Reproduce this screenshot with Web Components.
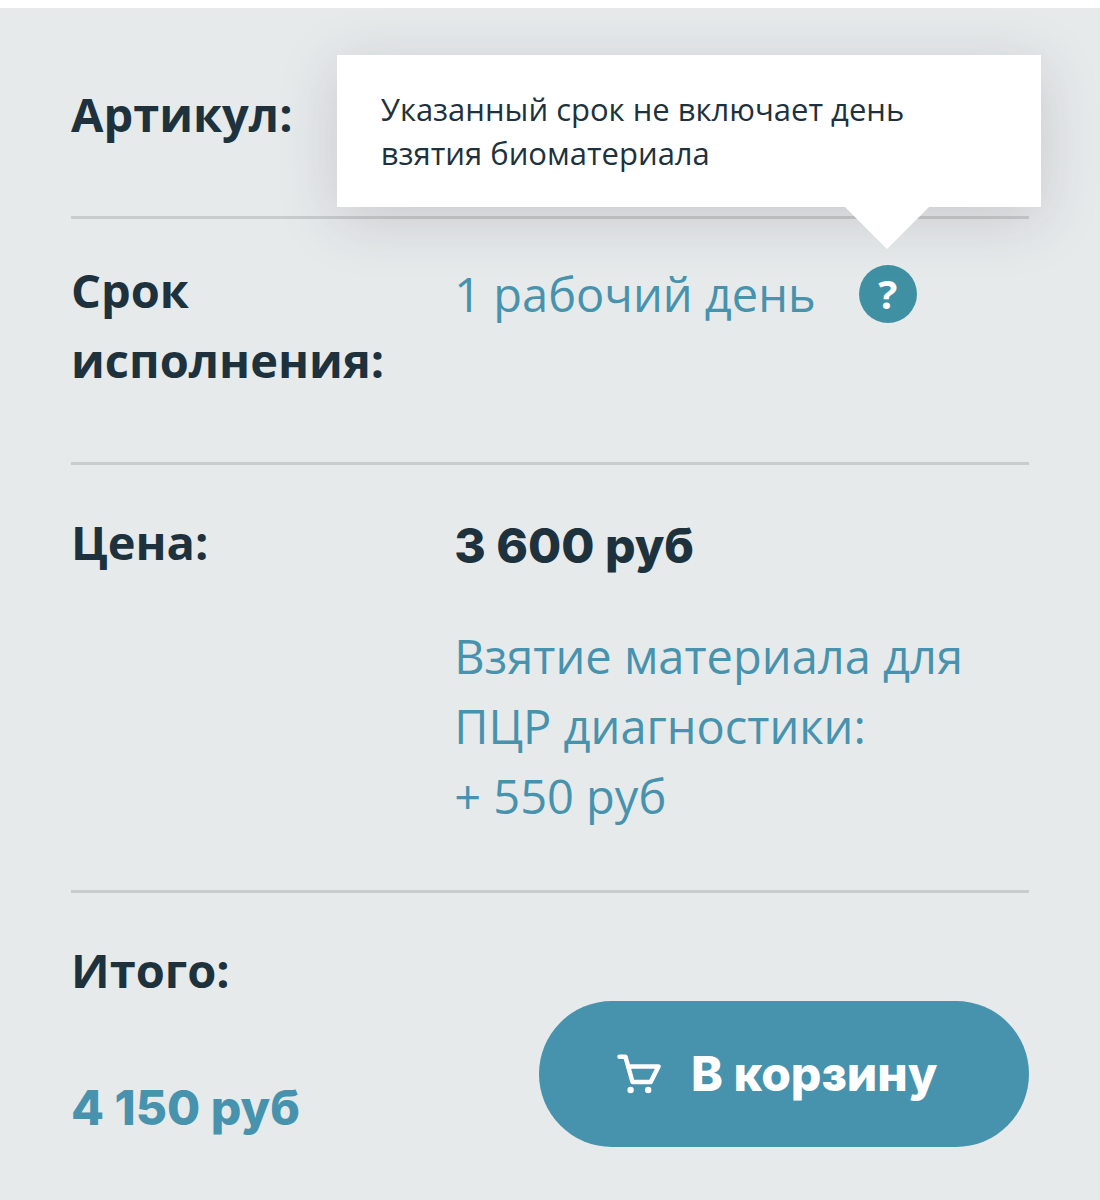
<!DOCTYPE html>
<html lang="ru">
<head>
<meta charset="utf-8">
<meta name="viewport" content="width=device-width, initial-scale=1">
<title>В корзину</title>
<style>
    body {
        margin: 0;
        padding-top: 8px;
        background-color: #FFF;
        font-family: "Open Sans", "Noto Sans", sans-serif;
        font-size: 47px;
        line-height: 70px;
        color: #1D323C;
        --accent: #4793AE;
        --line: #C8CCCD;
        --display: Inter, "Noto Sans", sans-serif;
    }
</style>
</head>
<body>
    <order-card>
        <order-row name="Артикул:"></order-row>
        <order-row name="Срок исполнения:">
            <order-term>1 рабочий день
                <help-tip slot="help">Указанный срок не включает день взятия биоматериала</help-tip>
            </order-term>
        </order-row>
        <order-row name="Цена:" price>
            <order-price>3 600 руб
                <span slot="extra">Взятие материала для ПЦР диагностики:<br>+ 550 руб</span>
            </order-price>
        </order-row>
        <order-total slot="total" name="Итого:" sum="4 150 руб">
            <cart-button>В корзину</cart-button>
        </order-total>
    </order-card>

<script>
    class OrderCard extends HTMLElement {
        constructor() {
            super();
            this.attachShadow({ mode: 'open' });
            this.shadowRoot.innerHTML = `
            <style>
                :host{
                    display: block;
                    box-sizing: border-box;
                    min-height: calc(100vh - 8px);
                    padding: 35px 71px 52px;
                    background-color: #E6EAEB;
                }
            </style>
            <slot></slot>
            <slot name="total"></slot>`;
        }
    }

    class OrderRow extends HTMLElement {
        constructor() {
            super();
            this.attachShadow({ mode: 'open' });
        }

        connectedCallback() {
            this.shadowRoot.innerHTML = `
            <style>
                :host{
                    display: grid;
                    grid-template-columns: 2fr 3fr;
                    padding: 36px 0 67px;
                    border-bottom: 3px solid var(--line);
                }

                :host([price]){
                    padding: 42px 0 59px;
                }

                .name{
                    font-weight: 700;
                }
            </style>
            <div class="name">${this.getAttribute('name')}</div>
            <div class="value"><slot></slot></div>`;
        }
    }

    class OrderTerm extends HTMLElement {
        constructor() {
            super();
            this.attachShadow({ mode: 'open' });
            this.shadowRoot.innerHTML = `
            <style>
                :host{
                    display: flex;
                    align-items: center;
                    gap: 43px;
                    padding-top: 4px;
                    color: var(--accent);
                }
            </style>
            <span><slot></slot></span>
            <slot name="help"></slot>`;
        }
    }

    class HelpTip extends HTMLElement {
        constructor() {
            super();
            this.attachShadow({ mode: 'open' });
            this.shadowRoot.innerHTML = `
            <style>
                :host{
                    display: block;
                    position: relative;
                    width: 58px;
                    height: 58px;
                }

                button{
                    display: block;
                    width: 100%;
                    height: 100%;
                    padding: 0;
                    border: none;
                    border-radius: 50%;
                    background-color: #3F90A3;
                    color: #FFF;
                    font-family: inherit;
                    font-size: 40px;
                    font-weight: 700;
                    line-height: 58px;
                    cursor: pointer;
                }

                .tip{
                    position: absolute;
                    right: -124px;
                    bottom: 116px;
                    box-sizing: border-box;
                    width: 704px;
                    padding: 32px 44px;
                    background-color: #FFF;
                    box-shadow: 0 12px 60px rgba(70, 50, 60, 0.18);
                    color: #1D323C;
                    font-size: 31px;
                    line-height: 44px;
                }

                .tip::after{
                    content: "";
                    position: absolute;
                    top: 100%;
                    right: 112px;
                    border: 42px solid transparent;
                    border-top-color: #FFF;
                    border-bottom: none;
                }
            </style>
            <button type="button" aria-describedby="tip">?</button>
            <div class="tip" id="tip" role="tooltip"><slot></slot></div>`;
        }
    }

    class OrderPrice extends HTMLElement {
        constructor() {
            super();
            this.attachShadow({ mode: 'open' });
            this.shadowRoot.innerHTML = `
            <style>
                :host{
                    display: flex;
                    flex-direction: column;
                    gap: 40px;
                    padding-top: 4px;
                }

                .sum{
                    font-family: var(--display);
                    font-size: 48px;
                    font-weight: 800;
                }

                .extra{
                    color: var(--accent);
                }
            </style>
            <div class="sum"><slot></slot></div>
            <div class="extra"><slot name="extra"></slot></div>`;
        }
    }

    class OrderTotal extends HTMLElement {
        constructor() {
            super();
            this.attachShadow({ mode: 'open' });
        }

        connectedCallback() {
            this.shadowRoot.innerHTML = `
            <style>
                :host{
                    display: flex;
                    justify-content: space-between;
                    align-items: flex-end;
                    padding-top: 42px;
                }

                .name{
                    font-weight: 700;
                }

                .sum{
                    margin: 68px 0 4px;
                    font-family: var(--display);
                    font-size: 48px;
                    font-weight: 800;
                    color: var(--accent);
                }
            </style>
            <div>
                <div class="name">${this.getAttribute('name')}</div>
                <div class="sum">${this.getAttribute('sum')}</div>
            </div>
            <slot></slot>`;
        }
    }

    class CartButton extends HTMLElement {
        constructor() {
            super();
            this.attachShadow({ mode: 'open' });
            this.shadowRoot.innerHTML = `
            <style>
                :host{
                    display: block;
                }

                button{
                    display: flex;
                    align-items: center;
                    gap: 30px;
                    min-width: 490px;
                    padding: 38px 78px;
                    border: none;
                    border-radius: 73px;
                    background-color: var(--accent);
                    color: #FFF;
                    font-family: var(--display);
                    font-size: 48px;
                    font-weight: 800;
                    line-height: 70px;
                    cursor: pointer;
                }

                svg{
                    flex: none;
                    width: 44px;
                    height: 40px;
                }
            </style>
            <button type="button">
                <svg viewBox="0 0 44 40" fill="none" stroke="#FFF" stroke-width="4.500" stroke-linecap="round" stroke-linejoin="round" aria-hidden="true">
                    <path d="M2.500 2.800h6l7 25.200h18.200L41.500 12.500H11.500"/>
                    <circle cx="13.600" cy="36" r="3.200" fill="#FFF" stroke="none"/>
                    <circle cx="31.200" cy="36" r="3.200" fill="#FFF" stroke="none"/>
                </svg>
                <span><slot></slot></span>
            </button>`;
        }
    }

    window.customElements.define('order-card', OrderCard);
    window.customElements.define('order-row', OrderRow);
    window.customElements.define('order-term', OrderTerm);
    window.customElements.define('help-tip', HelpTip);
    window.customElements.define('order-price', OrderPrice);
    window.customElements.define('order-total', OrderTotal);
    window.customElements.define('cart-button', CartButton);
</script>
</body>
</html>
